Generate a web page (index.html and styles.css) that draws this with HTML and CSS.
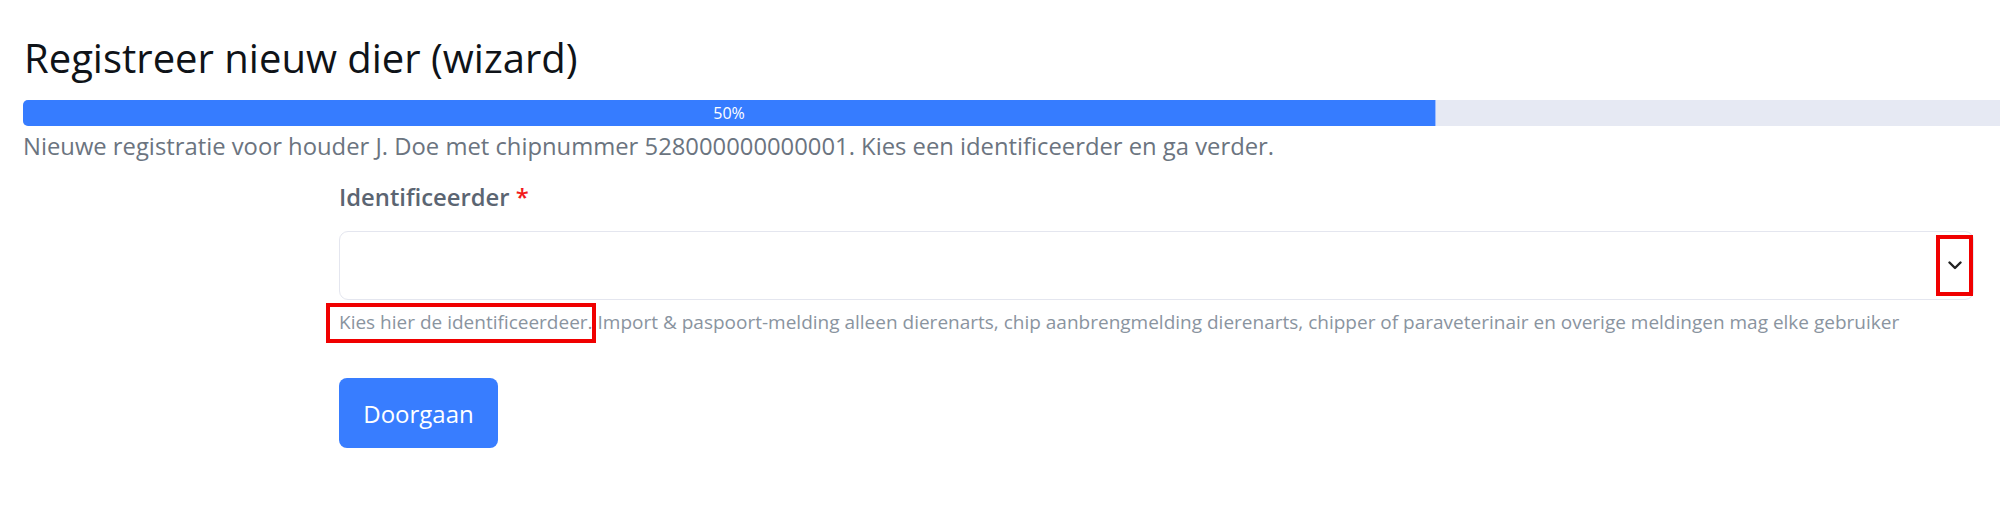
FILE: index.html
```html
<!DOCTYPE html>
<html lang="nl">
  <head>
    <meta charset="UTF-8" />
    <meta name="viewport" content="width=device-width, initial-scale=1.0" />
    <title>Registreer nieuw dier</title>
    <link rel="stylesheet" href="styles.css">
  </head>
  <body>
  <div class="page">
    <h1 class="title">Registreer nieuw dier (wizard)</h1>

    <div class="progress">
      <div class="progress-bar" style="width: 50%">50%</div>
    </div>

    <p class="lead">
      Nieuwe registratie voor houder J. Doe met chipnummer 528000000000001. Kies een identificeerder en ga verder.
    </p>

    <form class="wizard-form">
      <label class="field-label" for="identificeerder">Identificeerder <span class="required">*</span></label>

      <div class="select-wrap">
        <select id="identificeerder" class="select"></select>
        <span class="chevron">
          <svg width="14" height="9" viewBox="0 0 14 9">
            <path d="M1.5 1.5 L7 7 L12.5 1.5" fill="none" stroke="#222" stroke-width="2.4" stroke-linecap="round" stroke-linejoin="round"/>
          </svg>
        </span>
      </div>

      <small class="help">
        <span class="marked">Kies hier de identificeerdeer.</span> Import &amp; paspoort-melding alleen dierenarts, chip aanbrengmelding dierenarts, chipper of paraveterinair en overige meldingen mag elke gebruiker
      </small>

      <button type="button" class="btn">Doorgaan</button>
    </form>
  </div>
  </body>
</html>
```

FILE: styles.css
```css
html, body
{
    margin: 0;
    overflow: hidden;
    background: #fff;
}

.page
{
    padding: 34px 0 0 23px;
    font-family: "Open Sans", "Noto Sans", sans-serif;
}

.title
{
    margin: 0 0 18px 1px;
    font-size: 40px;
    font-weight: 500;
    line-height: 48px;
    color: #0f1318;
}

.progress
{
    width: 2824px;
    height: 26px;
    display: flex;
    background: #e6e9f3;
    border-radius: 5px;
    overflow: hidden;
}

.progress-bar
{
    display: flex;
    align-items: center;
    justify-content: center;
    background: #367cff;
    border-right: 1px solid #9cbcff;
    color: #fff;
    font-size: 16px;
}

.lead
{
    margin: 4px 0 0;
    font-size: 23.8px;
    line-height: 32px;
    color: #6b7480;
}

.wizard-form
{
    display: flex;
    flex-direction: column;
    align-items: flex-start;
    margin: 18px 0 0 316px;
    width: 1635px;
}

.field-label
{
    font-size: 23.8px;
    font-weight: 600;
    line-height: 34px;
    color: #5b6572;
}

.required
{
    color: #f21b1b;
}

.select-wrap
{
    position: relative;
    align-self: stretch;
    margin-top: 17px;
}

.select
{
    display: block;
    width: 100%;
    height: 69px;
    box-sizing: border-box;
    border: 1.5px solid #e4e6ef;
    border-radius: 9px;
    background: #fff;
    -webkit-appearance: none;
    appearance: none;
}

.chevron
{
    position: absolute;
    right: 1px;
    top: 4px;
    width: 29px;
    height: 53px;
    display: flex;
    align-items: center;
    justify-content: center;
    border: 4px solid #f00000;
}

.help
{
    margin-top: 8px;
    font-size: 19px;
    line-height: 28px;
    color: #8a949f;
}

.marked
{
    position: relative;
}

.marked::after
{
    content: "";
    position: absolute;
    left: -13px;
    right: -3px;
    top: -6px;
    bottom: -8px;
    border: 4px solid #f00000;
}

.btn
{
    margin-top: 42px;
    width: 159px;
    height: 70px;
    border: none;
    border-radius: 8px;
    background: #387dff;
    color: #fff;
    font-family: "Open Sans", "Noto Sans", sans-serif;
    font-size: 24px;
    cursor: pointer;
}
```
